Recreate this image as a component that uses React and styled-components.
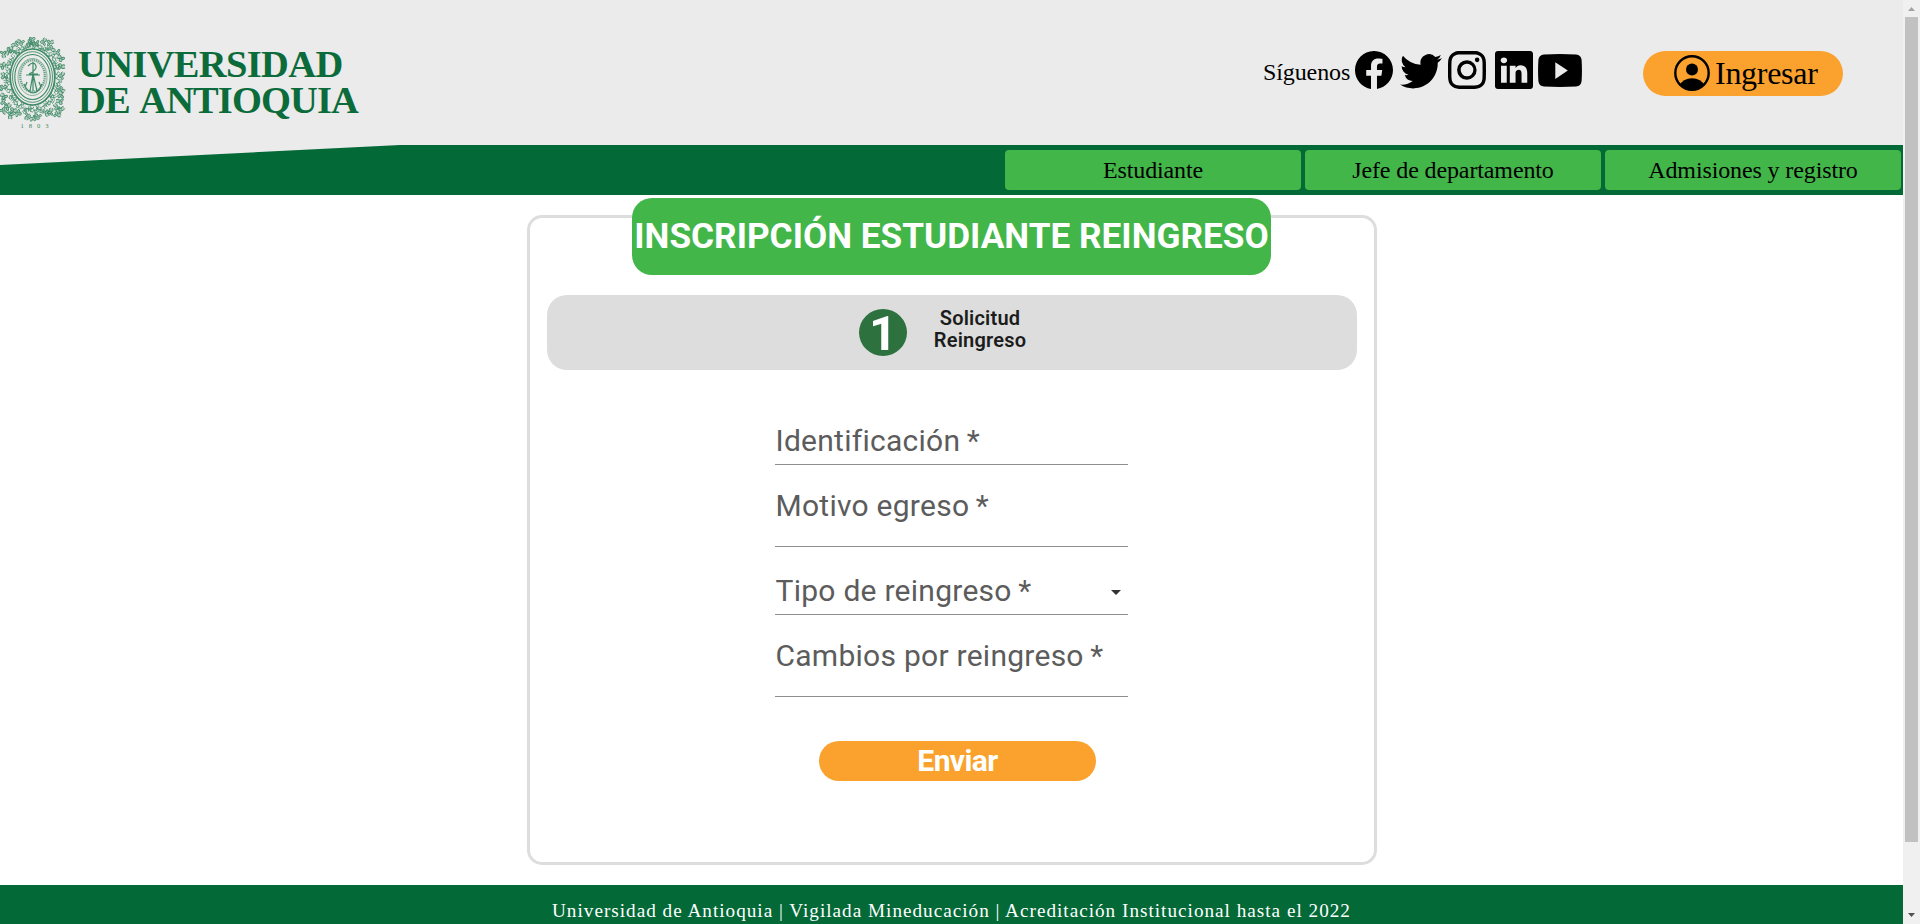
import React from 'react';
import styled, { createGlobalStyle } from 'styled-components';
import { BsFacebook, BsTwitter, BsInstagram, BsLinkedin } from 'react-icons/bs';

const GlobalStyle = createGlobalStyle`
  html, body { margin: 0; padding: 0; background: #fff; overflow: hidden; }
  *, *::before, *::after { box-sizing: border-box; }
`;

const serif = `'Liberation Serif', 'Times New Roman', serif`;
const sans = `Roboto, 'Liberation Sans', sans-serif`;

const Window = styled.div`
  display: flex;
  width: 1920px;
  height: 924px;
  overflow: hidden;
`;

const Page = styled.div`
  width: 1903px;
  height: 924px;
  display: flex;
  flex-direction: column;
  overflow: hidden;
`;

const Header = styled.header`
  height: 145px;
  flex: none;
  display: flex;
  align-items: flex-start;
  background: #ebebeb;
  font-family: ${serif};
`;

const Brand = styled.div`
  display: flex;
  width: 1263px;
  padding-top: 36px;
  color: #0b6b3a;
`;

const Seal = styled.svg`
  width: 66px;
  height: 94px;
  flex: none;
  margin-top: 1px;
`;

const BrandName = styled.div`
  margin: 10px 0 0 12px;
  font-weight: 700;
  font-size: 38.5px;
  line-height: 36px;
  white-space: nowrap;
`;

const BrandLine = styled.div`
  height: 36px;
  letter-spacing: ${(p) => p.$spacing}px;
  word-spacing: 3px;
`;

const Social = styled.div`
  display: flex;
  align-items: center;
  width: 380px;
  height: 38px;
  margin-top: 51px;
  font-size: 24px;
`;

const SocialLabel = styled.span`
  width: 92px;
  padding-top: 5px;
  letter-spacing: -0.1px;
`;

const SocialIcon = styled.span`
  display: flex;
  margin-right: ${(p) => p.$gap}px;
  svg { display: block; width: ${(p) => p.$w}px; height: ${(p) => p.$h}px; }
`;

const Login = styled.button`
  display: flex;
  align-items: center;
  width: 200px;
  height: 45px;
  margin-top: 51px;
  padding: 0 0 1px 31px;
  gap: 5px;
  border: 0;
  border-radius: 23px;
  background: #faa22d;
  color: #000;
  font: 32px ${serif};
  letter-spacing: -0.28px;
  svg { width: 36px; height: 36px; flex: none; }
`;

const Nav = styled.nav`
  height: 50px;
  flex: none;
  display: flex;
  justify-content: flex-end;
  gap: 4px;
  padding: 5px 2px 5px 0;
  background: #036937;
`;

const Slant = styled.div`
  width: 400px;
  height: 20px;
  margin: -5px auto 0 0;
  background: #ebebeb;
  clip-path: polygon(0 0, 100% 0, 0 100%);
`;

const NavItem = styled.a`
  width: 296px;
  height: 40px;
  border-radius: 4px;
  background: #43b649;
  font: 24px/40px ${serif};
  letter-spacing: -0.12px;
  text-align: center;
  color: #000;
`;

const Main = styled.main`
  height: 690px;
  flex: none;
  padding: 20px 0 0 527px;
  font-family: ${sans};
`;

const Card = styled.section`
  width: 850px;
  height: 650px;
  padding: 0 17px;
  border: 3px solid #ddd;
  border-radius: 15px;
  display: flex;
  flex-direction: column;
`;

const Title = styled.h1`
  width: 639px;
  height: 77px;
  margin: -20px 0 20px 85px;
  border-radius: 20px;
  background: #43b649;
  color: #fff;
  font-size: 35.2px;
  font-weight: 700;
  line-height: 77px;
  text-align: center;
  white-space: nowrap;
`;

const StepBar = styled.div`
  height: 75px;
  display: flex;
  padding: 14px 0 0 312px;
  border-radius: 20px;
  background: #ddd;
`;

const StepNumber = styled.div`
  width: 48px;
  height: 47px;
  border-radius: 50%;
  background: #2d713f;
  color: #fff;
  font-size: 49px;
  font-weight: 700;
  line-height: 49px;
  text-align: center;
`;

const StepLabel = styled.div`
  width: 100px;
  margin: -2px 0 0 23px;
  font-size: 20px;
  font-weight: 600;
  line-height: 22px;
  letter-spacing: 0.2px;
  text-align: center;
  color: #1c1c1c;
`;

const Form = styled.form`
  width: 353px;
  margin-left: 228px;
  padding-top: 40px;
`;

const Field = styled.div`
  display: flex;
  height: ${(p) => p.$h}px;
  padding: ${(p) => p.$pad}px 0 0 0.5px;
  border-bottom: 1px solid #8e8e8e;
  font-size: 30px;
  line-height: 34px;
  letter-spacing: 0.26px;
  color: #5c5c5c;
  white-space: nowrap;
`;

const Required = styled.span`
  margin-left: 6.5px;
`;

const Caret = styled.span`
  margin: 16px 7px 0 auto;
  width: 10px;
  height: 5px;
  background: #333;
  clip-path: polygon(0 0, 100% 0, 50% 100%);
`;

const Submit = styled.button`
  display: block;
  width: 277px;
  height: 40px;
  margin: 44px 0 0 44px;
  padding: 0;
  border: 0;
  border-radius: 20px;
  background: #faa22d;
  color: #fff;
  font: 700 30px/40px ${sans};
  letter-spacing: -0.6px;
`;

const Footer = styled.footer`
  height: 39px;
  flex: none;
  padding-top: 15px;
  background: #036937;
  color: #fff;
  font: 19.2px/22px ${serif};
  letter-spacing: 1px;
  text-align: center;
`;

const Scrollbar = styled.div`
  width: 17px;
  height: 924px;
  display: flex;
  flex-direction: column;
  align-items: center;
  background: #f0f0f0;
`;

const Arrow = styled.span`
  width: 7px;
  height: 4px;
  margin: ${(p) => (p.$down ? 'auto 0 7px' : '7px 0 6px')};
  background: ${(p) => (p.$down ? '#505050' : '#a3a3a3')};
  clip-path: ${(p) => (p.$down ? 'polygon(0 0, 100% 0, 50% 100%)' : 'polygon(50% 0, 100% 100%, 0 100%)')};
`;

const Thumb = styled.div`
  width: 13px;
  height: 825px;
  background: #c1c1c1;
`;

const leaves = Array.from({ length: 46 }, (_, i) => {
  const a = (i / 46) * Math.PI * 2;
  const wobble = (i * 7) % 5;
  return {
    x: 32.5 + Math.cos(a) * (24 + (wobble % 3) * 1.5),
    y: 41 + Math.sin(a) * (30.5 + (wobble % 4) * 1.2),
    r: (a * 180) / Math.PI + wobble * 53,
  };
});

const sprigs = [
  [15, 7], [21, 5], [12, 13], [44, 5], [50, 6], [51, 12], [3, 17], [8, 14], [57, 15], [61, 21],
  [4, 65], [8, 70], [13, 74], [3, 74], [10, 78], [18, 76], [60, 64], [57, 70], [51, 75], [61, 73], [57, 78], [46, 76],
  [27, 79], [33, 81], [38, 79], [4, 39], [62, 39], [3, 51], [61, 53], [32, 3], [29, 6], [36, 6], [4, 59], [61, 58], [3, 29], [61, 30],
];

function UniversitySeal() {
  return (
    <Seal viewBox="0 0 66 94" fill="none" stroke="#3f8b66">
      {leaves.map((l, i) => (
        <path key={i} transform={`translate(${l.x} ${l.y}) rotate(${l.r})`} d="M-4 0L-1-2L0 1L2-2L4 0M-3 2L-1 0L2 2L3 1" strokeWidth=".8" opacity=".85" />
      ))}
      {sprigs.map(([x, y], i) => (
        <path key={i} transform={`translate(${x} ${y}) rotate(${i * 47})`} d="M-4 1Q-2-2 0 0Q0-4 2-3Q3-1 1 0Q4 0 3 2Q1 4 0 1Q-1 4-3 3" fill="#3f8b6655" strokeWidth=".9" opacity=".95" />
      ))}
      <ellipse cx="32.5" cy="40" rx="22.3" ry="28" fill="#ebebeb" strokeWidth="1.7" />
      <ellipse cx="32.5" cy="40" rx="20" ry="25.3" strokeWidth=".9" />
      <ellipse cx="32.5" cy="40" rx="17.7" ry="22.5" strokeWidth="1.1" />
      <ellipse cx="32.5" cy="40" rx="14.5" ry="18.5" strokeWidth=".6" />
      <ellipse cx="32.5" cy="39" rx="12.3" ry="15.8" strokeWidth="2.4" strokeDasharray="1.3 .8" opacity=".75" />
      <path d="M28 29Q34 23 36 29Q37 33 29 37H38M33 25V54M26 38H40M33 37L30 54M33 37L37 54M24 47Q28 56 33 56Q39 56 42 47M27 45L25 50M39 45L41 50" strokeWidth="1.2" />
      <text x="20.5" y="90.5" fill="#3f8b66" stroke="none" fontFamily="Liberation Serif, serif" fontSize="6.6" textLength="28">1803</text>
    </Seal>
  );
}

function YoutubeIcon() {
  return (
    <svg viewBox="0 0 44 33">
      <path fillRule="evenodd" d="M6 .5Q22-.3 38 .5Q43.2 1 43.6 6Q44.3 16.5 43.6 27Q43.2 32 38 32.5Q22 33.3 6 32.5Q.8 32 .4 27Q-.3 16.5 .4 6Q.8 1 6 .5ZM17.3 8.3V25L29.8 16.6Z" />
    </svg>
  );
}

function PersonIcon() {
  return (
    <svg viewBox="0 0 36 36">
      <defs><clipPath id="face"><circle cx="18" cy="18" r="17" /></clipPath></defs>
      <circle cx="18" cy="18" r="16.7" fill="none" stroke="#000" strokeWidth="2.4" />
      <circle cx="18" cy="14.4" r="6" />
      <path clipPath="url(#face)" d="M5 31Q9 23.3 18 23.3Q27 23.3 31 31L28 36H8Z" />
    </svg>
  );
}

export default function App() {
  return (
    <>
      <GlobalStyle />
      <Window>
        <Page>
          <Header>
            <Brand>
              <UniversitySeal />
              <BrandName>
                <BrandLine $spacing={-0.65}>UNIVERSIDAD</BrandLine>
                <BrandLine $spacing={-0.9}>DE ANTIOQUIA</BrandLine>
              </BrandName>
            </Brand>
            <Social>
              <SocialLabel>Síguenos</SocialLabel>
              <SocialIcon $w={38} $h={38} $gap={7}><BsFacebook /></SocialIcon>
              <SocialIcon $w={42} $h={42} $gap={6}><BsTwitter /></SocialIcon>
              <SocialIcon $w={38} $h={38} $gap={9}><BsInstagram /></SocialIcon>
              <SocialIcon $w={38} $h={38} $gap={5}><BsLinkedin /></SocialIcon>
              <SocialIcon $w={44} $h={33} $gap={0}><YoutubeIcon /></SocialIcon>
            </Social>
            <Login><PersonIcon />Ingresar</Login>
          </Header>
          <Nav>
            <Slant />
            <NavItem>Estudiante</NavItem>
            <NavItem>Jefe de departamento</NavItem>
            <NavItem>Admisiones y registro</NavItem>
          </Nav>
          <Main>
            <Card>
              <Title>INSCRIPCIÓN ESTUDIANTE REINGRESO</Title>
              <StepBar>
                <StepNumber>1</StepNumber>
                <StepLabel>Solicitud Reingreso</StepLabel>
              </StepBar>
              <Form>
                <Field $h={55} $pad={14}>Identificación<Required>*</Required></Field>
                <Field $h={82} $pad={24}>Motivo egreso<Required>*</Required></Field>
                <Field $h={68} $pad={27}>Tipo de reingreso<Required>*</Required><Caret /></Field>
                <Field $h={82} $pad={24}>Cambios por reingreso<Required>*</Required></Field>
                <Submit type="button">Enviar</Submit>
              </Form>
            </Card>
          </Main>
          <Footer>Universidad de Antioquia | Vigilada Mineducación | Acreditación Institucional hasta el 2022</Footer>
        </Page>
        <Scrollbar>
          <Arrow />
          <Thumb />
          <Arrow $down />
        </Scrollbar>
      </Window>
    </>
  );
}
